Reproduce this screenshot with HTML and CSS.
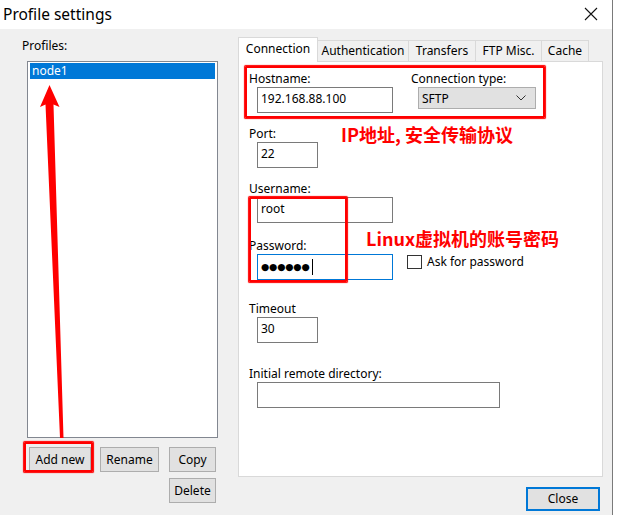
FILE: index.html
```html
<!DOCTYPE html>
<html>
<head>
<meta charset="utf-8">
<link rel="stylesheet" href="styles.css">
</head>
<body>
<div class="window">
  <div class="titlebar">
    <span class="title">Profile settings</span>
    <svg class="close-x" width="14" height="14" viewBox="0 0 14 14"><path d="M1 1L13 13M13 1L1 13" stroke="#111" stroke-width="1.1" fill="none"/></svg>
  </div>
  <div class="client">
    <div class="left">
      <div class="lbl">Profiles:</div>
      <div class="listbox"><div class="item sel">node1</div></div>
      <div class="btnrow">
        <div class="btn w-add">Add new</div>
        <div class="btn w-ren">Rename</div>
        <div class="btn w-copy">Copy</div>
      </div>
      <div class="btnrow2">
        <div class="btn w-copy">Delete</div>
      </div>
    </div>
    <div class="right">
      <div class="tabs">
        <div class="tab active t1">Connection</div>
        <div class="tab t2">Authentication</div>
        <div class="tab t3">Transfers</div>
        <div class="tab t4">FTP Misc.</div>
        <div class="tab t5">Cache</div>
      </div>
      <div class="panel">
        <div class="row host-row">
          <div class="field">
            <div class="lbl">Hostname:</div>
            <div class="input w-long">192.168.88.100</div>
          </div>
          <div class="field ctype">
            <div class="lbl">Connection type:</div>
            <div class="select"><span>SFTP</span><svg width="10" height="6" viewBox="0 0 10 6"><path d="M0.5 0.5L5 5L9.5 0.5" stroke="#333" stroke-width="1" fill="none"/></svg></div>
          </div>
        </div>
        <div class="field g-port">
          <div class="lbl">Port:</div>
          <div class="input w-short">22</div>
        </div>
        <div class="field g-user">
          <div class="lbl">Username:</div>
          <div class="input w-long">root</div>
        </div>
        <div class="field g-pass">
          <div class="lbl">Password:</div>
          <div class="row pass-row">
            <div class="input w-long focus"><span class="dots">●●●●●●</span><span class="caret"></span></div>
            <label class="check"><span class="box"></span><span>Ask for password</span></label>
          </div>
        </div>
        <div class="field g-timeout">
          <div class="lbl">Timeout</div>
          <div class="input w-short">30</div>
        </div>
        <div class="field g-dir">
          <div class="lbl">Initial remote directory:</div>
          <div class="input w-dir"></div>
        </div>
      </div>
      <div class="footer"><div class="btn close">Close</div></div>
    </div>
  </div>

  <div class="redbox rb-host"></div>
  <div class="redbox rb-user"></div>
  <div class="redbox rb-add"></div>
  <div class="note note-ip">IP地址, 安全传输协议</div>
  <div class="note note-linux">Linux虚拟机的账号密码</div>
  <svg class="arrow" width="70" height="440" viewBox="0 0 70 440">
    <polygon points="49.5,85 59.5,107 53.5,104.5 63.5,438 60,438 45.5,104.5 40,107" fill="#ff0000"/>
  </svg>
</div>
</body>
</html>
```

FILE: styles.css
```css
* { box-sizing: border-box; }
html, body { margin: 0; padding: 0; background: #ffffff; }
body {
  width: 617px;
  height: 515px;
  overflow: hidden;
  font-family: "Noto Sans", "Open Sans", sans-serif;
  font-size: 12px;
  color: #000;
}
.window {
  position: relative;
  width: 613px;
  height: 515px;
  border-right: 1px solid #7a7a7a;
}
.titlebar {
  height: 29px;
  background: #fff;
  display: flex;
  align-items: center;
  justify-content: space-between;
  padding-left: 3px;
  padding-right: 14px;
}
.title { font-size: 15.5px; line-height: 20px; margin-top: -1px; }
.close-x { margin-top: -2px; }
.client {
  height: 486px;
  background: #f0f0f0;
  display: grid;
  grid-template-columns: 196px 365px;
  column-gap: 20px;
  padding: 8px 0 0 22px;
  align-items: start;
}
.lbl { line-height: 16px; height: 16px; white-space: nowrap; }
.panel .lbl { height: 18px; padding-top: 2px; }
.left .lbl { height: 17px; padding-top: 1px; margin-bottom: 7px; }
.listbox {
  margin-left: 5px;
  width: 191px;
  height: 377px;
  border: 1px solid #828790;
  background: #fff;
  padding: 1px 2px;
}
.item { height: 16px; line-height: 16px; padding-left: 2px; }
.item.sel { background: #0078d7; color: #fff; }
.btnrow { display: flex; margin: 9px 0 0 7px; }
.btnrow2 { display: flex; justify-content: flex-end; margin: 6px 2px 0 0; }
.btn {
  height: 25px;
  line-height: 23px;
  background: #e1e1e1;
  border: 1px solid #adadad;
  text-align: center;
  white-space: nowrap;
}
.w-add { width: 62px; }
.w-ren { width: 59px; margin-left: 9px; }
.w-copy { width: 47px; margin-left: 10px; }
.btnrow2 .w-copy { margin-left: 0; }
.tabs { display: flex; align-items: flex-end; height: 24px; }
.tab {
  height: 21px;
  line-height: 20px;
  text-align: center;
  border: 1px solid #d9d9d9;
  border-bottom: none;
  margin-left: -1px;
  background: #f0f0f0;
  white-space: nowrap;
}
.tab.active {
  height: 25px;
  margin-bottom: -1px;
  background: #fff;
  margin-left: 0;
  line-height: 22px;
  position: relative;
  z-index: 1;
}
.t1 { width: 80px; }
.t2 { width: 92px; }
.t3 { width: 68px; }
.t4 { width: 67px; }
.t5 { width: 48px; }
.panel {
  height: 416px;
  border: 1px solid #d9d9d9;
  background: #fff;
  padding: 7px 10px;
}
.row { display: flex; align-items: flex-start; }
.field .input, .field .select { margin-left: 8px; }
.ctype { margin-left: 18px; }
.ctype .select { margin-left: 7px; }
.input {
  height: 26px;
  border: 1px solid #7a7a7a;
  background: #fff;
  padding: 3px 0 0 3px;
  line-height: 16px;
  white-space: nowrap;
}
.input.focus { border-color: #0078d7; display: flex; align-items: center; padding-top: 0; }
.w-long { width: 136px; }
.w-short { width: 61px; }
.w-dir { width: 243px; }
.select {
  width: 118px;
  height: 22px;
  background: #e1e1e1;
  border: 1px solid #adadad;
  display: flex;
  align-items: center;
  justify-content: space-between;
  padding: 0 9px 0 3px;
}
.g-port { margin-top: 11px; }
.g-user { margin-top: 11px; }
.g-pass { margin-top: 13px; }
.g-timeout { margin-top: 19px; }
.g-dir { margin-top: 21px; }
.dots { font-family: "DejaVu Sans", sans-serif; font-size: 9.5px; letter-spacing: -0.2px; line-height: 16px; }
.caret { display: inline-block; width: 1px; height: 16px; background: #000; margin-left: 2px; }
.check { display: flex; align-items: center; margin-left: 14px; gap: 5px; line-height: 16px; }
.box { width: 15px; height: 14px; border: 1px solid #333; background: #fff; }
.footer { display: flex; justify-content: flex-end; padding: 10px 3px 0 0; }
.btn.close { width: 74px; height: 24px; line-height: 20px; border: 2px solid #0078d7; }

.redbox {
  position: absolute;
  border: 2px solid #ff0000;
  box-shadow: 0 0 1px 0.5px #ff0000;
  border-radius: 1px;
}
.rb-host { left: 245px; top: 66px; width: 300px; height: 52px; }
.rb-user { left: 249px; top: 197px; width: 98px; height: 85px; }
.rb-add { left: 24px; top: 442px; width: 69px; height: 30px; }
.note {
  position: absolute;
  color: #ff0000;
  font-family: "Noto Sans CJK SC", sans-serif;
  font-weight: 700;
  font-size: 18px;
  line-height: 20px;
  white-space: nowrap;
}
.note-ip { left: 341px; top: 124px; }
.note-linux { left: 366px; top: 228px; }
.arrow { position: absolute; left: 0; top: 0; }
```
